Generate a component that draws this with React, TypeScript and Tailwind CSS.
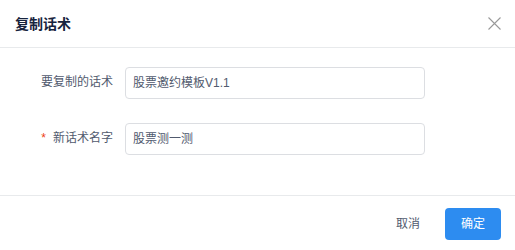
import React from "react";

export default function App() {
  return (
    <div
      className="flex h-[250px] w-[515px] flex-col bg-white text-xs text-[#515a6e]"
      style={{ fontFamily: '"Liberation Sans", "Noto Sans CJK SC", sans-serif' }}
    >
      <div className="flex h-12 shrink-0 items-center justify-between border-b border-[#e8eaec] pl-[15px] pr-[13px]">
        <div className="text-sm font-bold text-[#17233d]">复制话术</div>
        <button className="flex h-4 w-4 items-center justify-center text-[#999]">
          <svg width="13" height="13" viewBox="0 0 13 13" fill="none" stroke="currentColor" strokeWidth="1.1">
            <path d="M0.5 0.5l12 12M12.5 0.5l-12 12" />
          </svg>
        </button>
      </div>

      <div className="flex flex-1 flex-col gap-6 pt-[19px]">
        <div className="flex items-start">
          <label className="w-[125px] shrink-0 pr-3 pt-[5px] text-right leading-5">要复制的话术</label>
          <div className="flex h-8 w-[300px] items-center rounded border border-[#dcdee2] px-[7px] leading-5">
            股票邀约模板V1.1
          </div>
        </div>
        <div className="flex items-start">
          <label className="w-[125px] shrink-0 pr-3 pt-[5px] text-right leading-5">
            <span className="mr-[7px] text-[#ed4014]">*</span>新话术名字
          </label>
          <div className="flex h-8 w-[300px] items-center rounded border border-[#dcdee2] px-[7px] leading-5">
            股票测一测
          </div>
        </div>
      </div>

      <div className="flex h-[55px] shrink-0 items-start justify-end gap-[9px] border-t border-[#e8eaec] pr-[14px] pt-[12px]">
        <button className="h-8 px-[16px] text-[#515a6e]">取消</button>
        <button className="h-8 w-14 rounded bg-[#2d8cf0] text-white">确定</button>
      </div>
    </div>
  );
}
